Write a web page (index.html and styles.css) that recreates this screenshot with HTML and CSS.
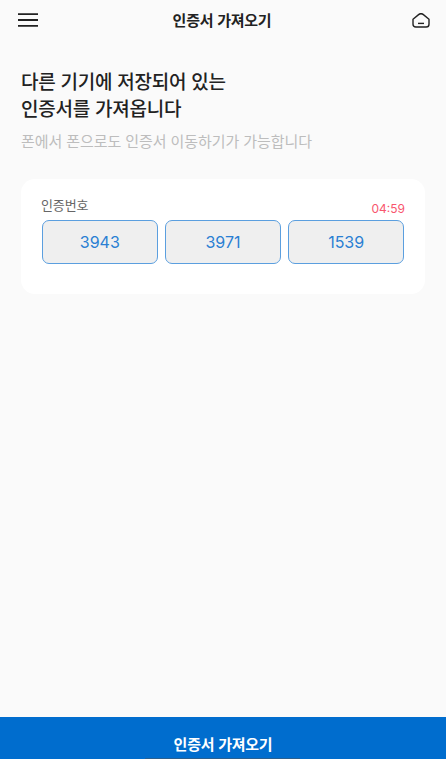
FILE: index.html
```html
<!DOCTYPE html>
<html lang="ko">
<head>
<meta charset="utf-8">
<title>인증서 가져오기</title>
<link rel="stylesheet" href="styles.css">
</head>
<body>
<div class="page">
  <header class="topbar">
    <svg class="icon-menu" width="20" height="14" viewBox="0 0 20 14" aria-hidden="true">
      <path d="M0 1.2H20M0 7H20M0 12.8H20" stroke="#222" stroke-width="1.8" fill="none"/>
    </svg>
    <h1 class="topbar-title">인증서 가져오기</h1>
    <svg class="icon-home" width="18" height="15" viewBox="0 0 18 15" aria-hidden="true">
      <path d="M1 6.2 6.6 1.6C8 .5 10 .5 11.4 1.6L17 6.2V11.2C17 12.9 15.9 14 14.2 14H3.8C2.1 14 1 12.9 1 11.2Z" stroke="#222" stroke-width="1.4" fill="none" stroke-linejoin="round"/>
      <path d="M6 10.4H12" stroke="#222" stroke-width="1.4" fill="none"/>
    </svg>
  </header>
  <main class="content">
    <h2 class="headline">다른 기기에 저장되어 있는<br>인증서를 가져옵니다</h2>
    <p class="subtext">폰에서 폰으로도 인증서 이동하기가 가능합니다</p>
    <section class="card">
      <div class="card-head">
        <span class="card-label">인증번호</span>
        <span class="timer">04:59</span>
      </div>
      <div class="codes">
        <div class="code">3943</div>
        <div class="code">3971</div>
        <div class="code">1539</div>
      </div>
    </section>
  </main>
  <footer class="action">
    <span class="action-label">인증서 가져오기</span>
    <span class="home-indicator"></span>
  </footer>
</div>
</body>
</html>
```
FILE: styles.css
```css
* { box-sizing: border-box; }
html, body { margin: 0; padding: 0; }
body {
  font-family: "Noto Sans CJK KR", "Inter", sans-serif;
  background: #fafafa;
  color: #222;
}
.page {
  width: 446px;
  height: 759px;
  display: flex;
  flex-direction: column;
  overflow: hidden;
}
.topbar {
  height: 40px;
  display: flex;
  align-items: center;
  justify-content: space-between;
  padding: 0 16px 0 18px;
}
.topbar-title {
  margin: 0 6px 0 0;
  font-size: 15px;
  font-weight: 700;
  letter-spacing: -0.25px;
  line-height: 20px;
  color: #222;
}
.content {
  flex: 1;
  padding: 27px 21px 0;
}
.headline {
  margin: 0;
  font-size: 19px;
  font-weight: 500;
  line-height: 27px;
  letter-spacing: -0.25px;
  color: #222;
}
.subtext {
  margin: 10px 0 0;
  font-size: 15px;
  line-height: 20px;
  letter-spacing: -0.08px;
  color: #bdbdbd;
}
.card {
  margin-top: 28px;
  height: 115px;
  background: #fff;
  border-radius: 14px;
  padding: 17px 21px 0;
}
.card-head {
  height: 24px;
  display: flex;
  justify-content: space-between;
  align-items: flex-start;
}
.card-label {
  margin-left: -1px;
  font-size: 13px;
  line-height: 18px;
  letter-spacing: -0.1px;
  color: #666;
}
.timer {
  font-family: "Inter", sans-serif;
  font-size: 12px;
  line-height: 16px;
  margin: 5px -1px 0 0;
  color: #f8566e;
}
.codes {
  display: grid;
  grid-template-columns: repeat(3, 1fr);
  gap: 7.5px;
}
.code {
  height: 44px;
  display: flex;
  align-items: center;
  justify-content: center;
  padding-bottom: 1px;
  background: #efefef;
  border: 1.5px solid #5b9fdf;
  border-radius: 7px;
  font-family: "Inter", sans-serif;
  font-size: 16px;
  color: #2a7fd3;
}
.action {
  height: 42px;
  background: #006dce;
  position: relative;
  display: flex;
  justify-content: center;
  padding-top: 17px;
}
.action-label {
  font-size: 15px;
  font-weight: 700;
  letter-spacing: -0.25px;
  line-height: 20px;
  color: #fff;
}
.home-indicator {
  position: absolute;
  left: 145px;
  bottom: 0;
  width: 155px;
  height: 1px;
  background: #2a6090;
}
```
